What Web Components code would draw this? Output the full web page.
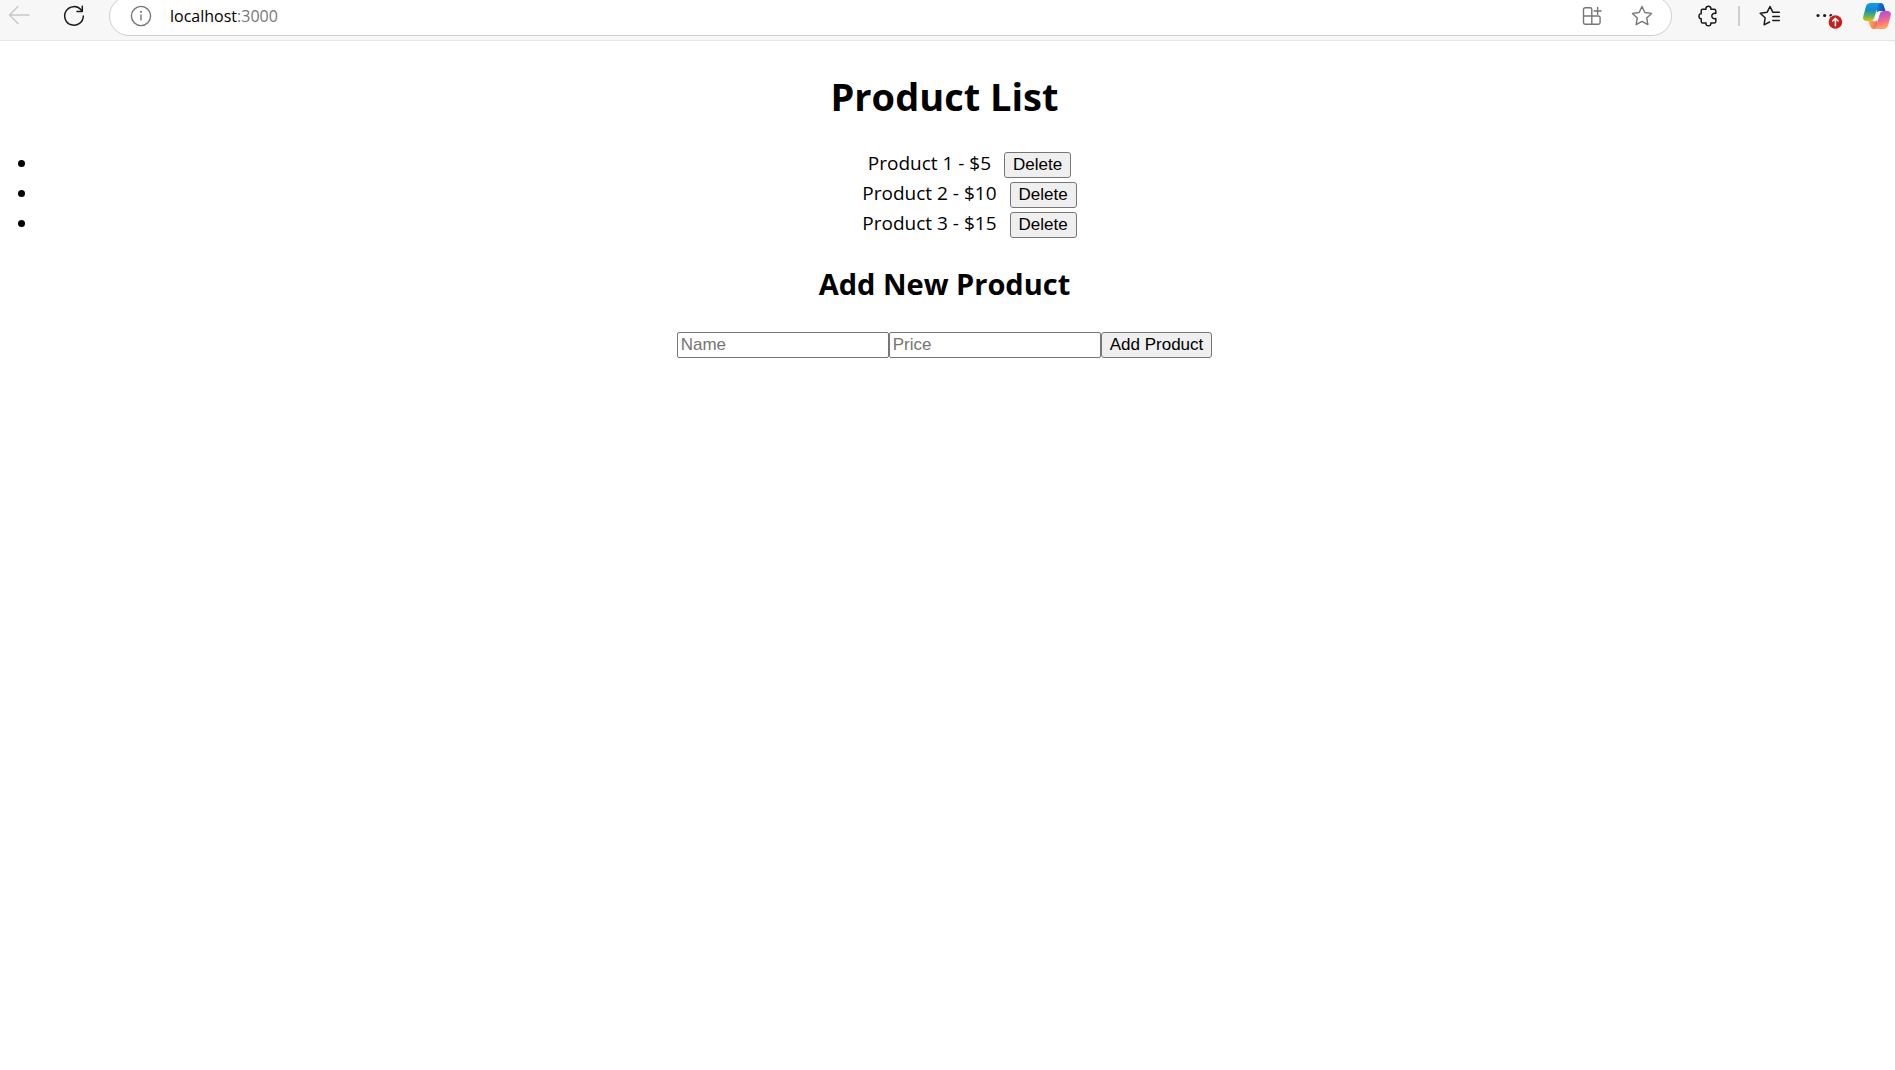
<!DOCTYPE html>
<html lang="en">
<head>
<meta charset="utf-8">
<title>Product List</title>
<style>
  body { margin: 0; background: #f7f7f7; color: #000; font-family: "Open Sans", "Noto Sans", sans-serif; font-size: 19px; line-height: 28px; }
</style>
</head>
<body>
<browser-bar></browser-bar>
<product-app>
  <product-list></product-list>
  <product-form></product-form>
</product-app>
<script>
class ShadowElement extends HTMLElement {
  constructor() {
    super();
    this.attachShadow({ mode: "open" }).innerHTML = this.constructor.markup;
  }
}

customElements.define("tool-button", class extends ShadowElement {
  static markup = `
    <style>
      :host { display: block; flex: none; }
      button { display: flex; align-items: center; justify-content: center; width: 32px; height: 32px; padding: 0; border: 0; background: none; color: inherit; }
    </style>
    <button type="button"><slot></slot></button>`;
  connectedCallback() {
    this.shadowRoot.querySelector("button").setAttribute("aria-label", this.getAttribute("label"));
  }
});

customElements.define("address-bar", class extends ShadowElement {
  static markup = `
    <style>
      :host { display: flex; align-items: center; box-sizing: border-box; height: 40px; flex: 1; padding: 0 13px 0 15px; border: 1px solid #cfcfcf; border-radius: 20px; background: #fff; color: #767676; }
      .url { flex: 1; padding-left: 13px; font-size: 16px; line-height: 24px; }
      b { font-weight: 400; color: #000; }
      tool-button + tool-button { margin-left: 18px; }
      svg { display: block; fill: none; stroke: currentColor; }
    </style>
    <tool-button label="Site information"><svg width="22" height="22" viewBox="0 0 22 22" stroke-width="1.4"><circle cx="11" cy="11" r="9.6"/><path d="M11 9.6v6"/><circle cx="11" cy="6.8" r=".4"/></svg></tool-button>
    <span class="url"><b>localhost</b>:3000</span>
    <tool-button label="App available"><svg width="20" height="20" viewBox="0 0 20 20" stroke-width="1.4"><path d="M9.800 10H1.500M9.800 18.300V3.400a1.700 1.700 0 0 0-1.700-1.700H3.200a1.700 1.700 0 0 0-1.700 1.700v13.200a1.700 1.700 0 0 0 1.700 1.700h13.200a1.700 1.700 0 0 0 1.700-1.700v-4.900a1.700 1.700 0 0 0-1.700-1.700H9.800M15.600 1v8M11.600 5h8"/></svg></tool-button>
    <tool-button label="Add to favorites"><svg width="22" height="22" viewBox="0 0 22 22" stroke-width="1.4" stroke-linejoin="round"><path d="M11 1.500l2.900 6 6.600.9-4.800 4.600 1.200 6.600-5.900-3.200-5.900 3.200L6.300 13 1.500 8.400l6.600-.9z"/></svg></tool-button>`;
});

customElements.define("browser-bar", class extends ShadowElement {
  static markup = `
    <style>
      :host { display: block; background: #f7f7f7; }
      nav { display: flex; align-items: flex-end; box-sizing: border-box; height: 41px; padding: 0 2px 4px 3px; border-bottom: 1px solid #e6e6e6; color: #1b1b1b; }
      tool-button { padding-bottom: 4px; }
      address-bar { margin-left: 19px; }
      .back { color: #c8c8c8; padding-bottom: 5px; }
      .reload { margin-left: 23px; }
      .ext { margin-left: 20px; }
      .rule { width: 2px; height: 20px; margin: 0 14px 10px; background: #cfcfcf; }
      .more { margin-left: 26px; }
      .copilot { margin-left: 17px; }
      svg { display: block; fill: none; stroke: currentColor; stroke-linecap: round; stroke-linejoin: round; stroke-width: 1.5; overflow: visible; }
    </style>
    <nav aria-label="Browser toolbar">
      <tool-button class="back" label="Back"><svg width="22" height="20" viewBox="0 0 22 20"><path d="M21 10H1.500M10 1.500L1.500 10l8.500 8.500"/></svg></tool-button>
      <tool-button class="reload" label="Refresh"><svg width="22" height="22" viewBox="0 0 22 22"><path d="M20.300 11a9.300 9.300 0 1 1-2.300-6.200l1 1.200M19.300 1.300v5.300h-5.300"/></svg></tool-button>
      <address-bar></address-bar>
      <tool-button class="ext" label="Extensions"><svg width="20" height="22" viewBox="0 0 20 22"><path d="M4.500 4.200H8C7.600 2 9 1.200 10.400 1.200s2.800.8 2.400 3h3.300q1.700 0 1.700 1.700v2.500c-2.600-.5-4 .8-4 2.600s1.400 3.100 4 2.600v2.800q0 1.700-1.700 1.700h-3.300c.4 2-1 2.700-2.400 2.700S7.600 20.100 8 18.100H4.700q-1.500 0-1.500-1.700v-2.700C1.500 13.800 1 12.500 1 11.200S1.500 8.600 3.200 8.700V5.900q0-1.700 1.300-1.700z"/></svg></tool-button>
      <span class="rule"></span>
      <tool-button class="fav" label="Favorites"><svg width="22" height="22" viewBox="0 0 22 22"><path d="M20.300 7.200h-6.500L11 1.500 8.200 7.200 1.200 8.300l4.900 4.500-1 7L10.500 17M13.800 11.400h6.500M13.800 15.600h6.500"/></svg></tool-button>
      <tool-button class="more" label="Settings and more"><svg width="28" height="26" viewBox="0 0 28 26"><g fill="currentColor" stroke="none"><circle cx="4" cy="12.500" r="1.600"/><circle cx="10.600" cy="12.500" r="1.600"/><circle cx="17" cy="12.500" r="1.600"/><circle cx="21.400" cy="19" r="7.400" fill="#f7f7f7"/><circle cx="21.400" cy="19" r="6.800" fill="#c81e1e"/></g><path stroke="#fff" d="M21.400 22.800v-7.400M18.700 18l2.700-2.700 2.700 2.700"/></svg></tool-button>
      <tool-button class="copilot" label="Copilot"><svg width="28" height="26" viewBox="0 0 28 26">
        <defs>
          <linearGradient id="a" x1="0" y1="0" x2="0" y2="1"><stop offset="0" stop-color="#159bec"/><stop offset=".4" stop-color="#168bc8"/><stop offset=".7" stop-color="#56b45c"/><stop offset="1" stop-color="#e8bd08"/></linearGradient>
          <linearGradient id="b" x1="0" y1="0" x2=".2" y2="1"><stop offset="0" stop-color="#a44ee8"/><stop offset=".4" stop-color="#d659b7"/><stop offset=".7" stop-color="#fb727b"/><stop offset="1" stop-color="#ffa562"/></linearGradient>
          <linearGradient id="c" x1="0" y1="0" x2="1" y2="0"><stop offset="0" stop-color="#1688e0"/><stop offset="1" stop-color="#1647b8"/></linearGradient>
          <linearGradient id="d" x1="0" y1="0" x2="1" y2="0"><stop offset="0" stop-color="#ffb44d"/><stop offset="1" stop-color="#ed526e"/></linearGradient>
        </defs>
        <g stroke="none">
          <path fill="url(#c)" d="M12 0h5.500c2 0 2.800 1.200 3.500 3.200L22.500 8H19c-2.500 0-3.700 1-4.500 3z"/>
          <path fill="url(#d)" d="M16 26h-5.500c-2 0-2.800-1.200-3.500-3.200L5.500 18H9c2.500 0 3.700-1 4.500-3z"/>
          <path fill="url(#a)" d="M7.500 0H18c-2 0-2.800 1.500-3.500 4l-3 10c-.9 3-2 4-4.500 4H4c-3 0-4.500-1.500-3.700-4.700l2.600-9.500C3.700 1.200 5 0 7.500 0z"/>
          <path fill="url(#b)" d="M20.500 26H10c2 0 2.800-1.500 3.500-4l3-10c.9-3 2-4 4.500-4h3c3 0 4.500 1.500 3.700 4.700l-2.600 9.500c-.8 2.600-2.100 3.800-4.600 3.800z"/>
          <path fill="#fff" d="M14.300 9.500c.7-1.200 1.700-1.600 3.500-1.600-1 .9-1.300 2-1.700 3.400l-1.900 5.700c-.8 1.200-1.900 1.500-3.500 1.500 1-.9 1.400-2.200 1.900-3.800z"/>
        </g></svg></tool-button>
    </nav>`;
});

customElements.define("product-app", class extends ShadowElement {
  static markup = `
    <style>
      :host { display: block; box-sizing: border-box; min-height: calc(100vh - 41px); padding: 28px 6px 0 0; border-top-right-radius: 6px; background: #fff; text-align: center; }
      h1 { margin: 0 0 26px; font-size: 38px; line-height: 54px; }
    </style>
    <h1>Product List</h1>
    <slot></slot>`;
});

const buttonStyle = `
  button { box-sizing: border-box; height: 26px; padding: 0 8px; border: 1px solid #767676; border-radius: 3px; background: #efefef; color: #000; font: 17px/24px "Liberation Sans", Arial, sans-serif; }`;

customElements.define("product-item", class extends ShadowElement {
  static markup = `
    <style>
      :host { display: inline-flex; align-items: flex-start; height: 30px; gap: 13px; vertical-align: top; }
      ${buttonStyle}
      button { margin: 3px 0 0; }
    </style>
    <span><slot></slot></span>
    <button type="button">Delete</button>`;
});

customElements.define("product-list", class extends ShadowElement {
  static markup = `
    <style>
      :host { display: block; }
      ul { margin: 0; padding: 0 0 0 38px; }
      li { padding-left: 12px; }
    </style>
    <ul>
      <li><product-item>Product 1 - $5</product-item></li>
      <li><product-item>Product 2 - $10</product-item></li>
      <li><product-item>Product 3 - $15</product-item></li>
    </ul>`;
});

customElements.define("product-form", class extends ShadowElement {
  static markup = `
    <style>
      :host { display: block; }
      h2 { margin: 25px 0 28px; font-size: 29px; line-height: 40px; }
      form { display: flex; justify-content: center; }
      input { box-sizing: border-box; width: 212px; height: 26px; margin: 0; padding: 0 3px; border: 1px solid #767676; border-radius: 2px; background: #fff; font: 17px/24px "Liberation Sans", Arial, sans-serif; }
      input::placeholder { color: #757575; }
      ${buttonStyle}
    </style>
    <h2>Add New Product</h2>
    <form>
      <input type="text" placeholder="Name" aria-label="Name">
      <input type="text" placeholder="Price" aria-label="Price">
      <button type="submit">Add Product</button>
    </form>`;
});
</script>
</body>
</html>
